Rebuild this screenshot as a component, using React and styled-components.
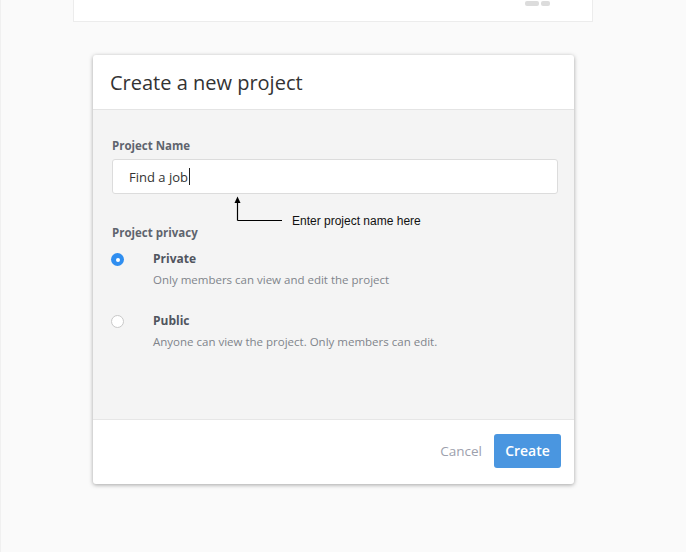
import styled, { createGlobalStyle } from "styled-components";

const GlobalStyle = createGlobalStyle`
  html, body {
    margin: 0;
    background: #fafafa;
    font-family: "Open Sans", "Noto Sans", sans-serif;
  }
`;

export default function App() {
  return (
    <>
      <GlobalStyle />
      <Page>
        <TopCard>
          <Pill $w={14} />
          <Pill $w={9} />
        </TopCard>
        <Modal>
          <ModalHeader>
            <Title>Create a new project</Title>
          </ModalHeader>
          <ModalBody>
            <Label>Project Name</Label>
            <InputBox>
              Find a job<Caret />
            </InputBox>
            <Hint>
              <HintArrow width="50" height="26" viewBox="0 0 50 26">
                <path d="M1.5 24.5 H46" stroke="#000" strokeWidth="1.2" fill="none" />
                <path d="M1.5 24.5 V4" stroke="#000" strokeWidth="1.2" fill="none" />
                <path d="M1.5 0.5 L4.5 7 L-1.5 7 Z" fill="#000" />
              </HintArrow>
              <HintText>Enter project name here</HintText>
            </Hint>
            <Label $top={2}>Project privacy</Label>
            <Option>
              <Radio $checked />
              <OptionText>
                <OptionTitle>Private</OptionTitle>
                <OptionDesc>Only members can view and edit the project</OptionDesc>
              </OptionText>
            </Option>
            <Option $top={23}>
              <Radio />
              <OptionText>
                <OptionTitle>Public</OptionTitle>
                <OptionDesc>Anyone can view the project. Only members can edit.</OptionDesc>
              </OptionText>
            </Option>
          </ModalBody>
          <ModalFooter>
            <CancelButton>Cancel</CancelButton>
            <CreateButton>Create</CreateButton>
          </ModalFooter>
        </Modal>
      </Page>
    </>
  );
}

// Styling starts here

const Page = styled.div`
  min-height: 552px;
  box-sizing: border-box;
  border-left: 1px solid #f0f0f0;
  overflow: hidden;
`;

const TopCard = styled.div`
  margin-left: 72px;
  width: 520px;
  height: 22px;
  background: #fff;
  border: 1px solid #ececec;
  border-top: none;
  display: flex;
  justify-content: flex-end;
  align-items: flex-start;
  gap: 2px;
  padding-right: 42px;
  box-sizing: border-box;
`;

const Pill = styled.span`
  width: ${(p) => p.$w}px;
  height: 5px;
  margin-top: 1px;
  border-radius: 2px;
  background: #dcdcdc;
`;

const Modal = styled.div`
  margin: 33px 0 0 92px;
  width: 481px;
  background: #fff;
  border-radius: 3px;
  box-shadow: 0 1px 4px rgba(0, 0, 0, 0.35);
  overflow: hidden;
`;

const ModalHeader = styled.div`
  height: 54px;
  display: flex;
  align-items: center;
  padding-left: 17px;
  border-bottom: 1px solid #e4e4e4;
`;

const Title = styled.h2`
  margin: 0;
  font-size: 20px;
  font-weight: 400;
  color: #333;
`;

const ModalBody = styled.div`
  background: #f4f4f4;
  height: 309px;
  padding: 27px 16px 0 19px;
  box-sizing: border-box;
`;

const Label = styled.div`
  font-size: 11.5px;
  font-weight: 700;
  color: #5f646e;
  margin-top: ${(p) => p.$top || 0}px;
  line-height: 18px;
`;

const InputBox = styled.div`
  margin-top: 4px;
  height: 35px;
  box-sizing: border-box;
  background: #fff;
  border: 1px solid #dcdcdc;
  border-radius: 3px;
  padding-left: 16px;
  display: flex;
  align-items: center;
  font-size: 13px;
  color: #333;
`;

const Caret = styled.span`
  display: inline-block;
  width: 1px;
  height: 17px;
  background: #222;
  margin-left: 1px;
`;

const Hint = styled.div`
  display: flex;
  align-items: flex-end;
  margin-left: 124px;
  margin-top: 2px;
  height: 26px;
`;

const HintArrow = styled.svg`
  display: block;
  overflow: visible;
`;

const HintText = styled.span`
  font-family: "Liberation Sans", Arial, sans-serif;
  font-size: 12px;
  color: #111;
  margin-left: 6px;
  line-height: 12px;
  margin-bottom: -5px;
`;

const Option = styled.div`
  display: flex;
  margin-top: ${(p) => p.$top || 8}px;
`;

const Radio = styled.span`
  width: 13px;
  height: 13px;
  box-sizing: border-box;
  border-radius: 50%;
  margin: 3px 0 0 -1px;
  flex-shrink: 0;
  background: ${(p) => (p.$checked ? "#2f8ef0" : "#fff")};
  border: ${(p) => (p.$checked ? "none" : "1.5px solid #c8c8c8")};
  display: flex;
  align-items: center;
  justify-content: center;
  &::after {
    content: "";
    width: 4px;
    height: 4px;
    border-radius: 50%;
    background: #fff;
    display: ${(p) => (p.$checked ? "block" : "none")};
  }
`;

const OptionText = styled.div`
  margin-left: 29px;
  display: flex;
  flex-direction: column;
  gap: 3px;
`;

const OptionTitle = styled.div`
  font-size: 12px;
  font-weight: 700;
  color: #50555e;
  line-height: 18px;
`;

const OptionDesc = styled.div`
  font-size: 11.5px;
  color: #80848b;
  line-height: 18px;
`;

const ModalFooter = styled.div`
  height: 65px;
  box-sizing: border-box;
  border-top: 1px solid #e6e6e6;
  display: flex;
  align-items: center;
  justify-content: flex-end;
  padding: 0 13px 3px 0;
  gap: 12px;
`;

const CancelButton = styled.button`
  border: none;
  background: none;
  font-family: inherit;
  font-size: 13.5px;
  color: #9da1ad;
  padding: 0;
  cursor: pointer;
`;

const CreateButton = styled.button`
  border: none;
  background: #4a96e0;
  color: #fff;
  font-family: inherit;
  font-size: 14px;
  font-weight: 600;
  height: 34px;
  width: 67px;
  border-radius: 3px;
  cursor: pointer;
`;
